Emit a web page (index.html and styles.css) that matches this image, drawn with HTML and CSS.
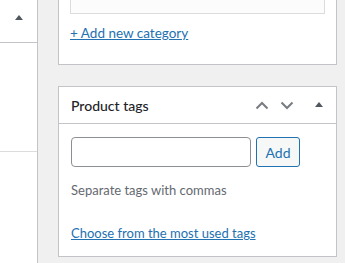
FILE: index.html
```html
<!DOCTYPE html>
<html lang="en">

<head>
    <meta charset="UTF-8">
    <meta name="viewport" content="width=device-width, initial-scale=1.0">
    <title>Product tags</title>
    <link rel="stylesheet" href="styles.css">
</head>

<body>
    <div class="layout">
        <!-- left column, cut off -->
        <div class="main-col">
            <div class="main-head">
                <span class="toggle-tri"></span>
            </div>
            <div class="main-row"></div>
        </div>

        <!-- sidebar -->
        <div class="side-col">
            <div class="postbox postbox-cut">
                <div class="cat-list"></div>
                <a href="#" class="add-cat">+ Add new category</a>
            </div>

            <div class="postbox">
                <div class="postbox-header">
                    <h2>Product tags</h2>
                    <div class="handle-actions">
                        <svg width="14" height="9" viewBox="0 0 14 9"><path d="M1.5 7.5 L7 2 L12.5 7.5" fill="none" stroke="#787c82" stroke-width="2"/></svg>
                        <svg width="14" height="9" viewBox="0 0 14 9"><path d="M1.5 1.5 L7 7 L12.5 1.5" fill="none" stroke="#787c82" stroke-width="2"/></svg>
                        <span class="toggle-tri"></span>
                    </div>
                </div>
                <div class="inside">
                    <div class="tag-add">
                        <input type="text" class="tag-input">
                        <button class="button">Add</button>
                    </div>
                    <p class="howto">Separate tags with commas</p>
                    <a href="#" class="tagcloud-link">Choose from the most used tags</a>
                </div>
            </div>
        </div>
    </div>
</body>

</html>
```

FILE: styles.css
```css
* {
    margin: 0;
    padding: 0;
    box-sizing: border-box;
}

body {
    background: #f0f0f1;
    font-family: Lato, "Noto Sans", sans-serif;
    font-size: 13px;
    color: #1d2327;
    overflow: hidden;
}

a {
    color: #2271b1;
    text-decoration: underline;
}

.layout {
    display: flex;
    height: 263px;
}

.main-col {
    width: 38px;
    background: #fff;
    border-right: 1px solid #c3c4c7;
}

.main-head {
    height: 43px;
    border-bottom: 1px solid #c3c4c7;
    display: flex;
    justify-content: flex-end;
    padding: 13px 14px 0 0;
}

.main-row {
    height: 109px;
    border-bottom: 1px solid #dcdcde;
}

.toggle-tri {
    width: 0;
    height: 0;
    border-left: 4px solid transparent;
    border-right: 4px solid transparent;
    border-bottom: 5px solid #50575e;
    margin-top: 2px;
}

.side-col {
    width: 279px;
    margin-left: 20px;
}

.postbox {
    background: #fff;
    border: 1px solid #c3c4c7;
}

.postbox-cut {
    border-top: none;
    height: 65px;
    padding: 0 11px;
    margin-bottom: 21px;
}

.cat-list {
    height: 14px;
    background: #fcfcfc;
    border: 1px solid #dcdcde;
    border-top: none;
    margin-bottom: 10px;
}

.add-cat {
    display: block;
    font-size: 13.5px;
    line-height: 18px;
}

.postbox-header {
    height: 37px;
    border-bottom: 1px solid #c3c4c7;
    display: flex;
    align-items: center;
    justify-content: space-between;
    padding: 0 13px 0 12px;
}

.postbox-header h2 {
    font-size: 14px;
    font-weight: 500;
    color: #1d2327;
}

.handle-actions {
    display: flex;
    align-items: center;
    gap: 11px;
}

.handle-actions .toggle-tri {
    margin: 0 0 1px 10px;
}

.inside {
    padding: 13px 12px 0;
    height: 132px;
}

.tag-add {
    display: flex;
    gap: 5px;
}

.tag-input {
    width: 180px;
    height: 30px;
    border: 1px solid #8c8f94;
    border-radius: 4px;
    background: #fff;
}

.button {
    height: 30px;
    width: 44px;
    border: 1px solid #2271b1;
    border-radius: 3px;
    background: #f6f7f7;
    color: #2271b1;
    font-family: inherit;
    font-size: 14px;
}

.howto {
    color: #646970;
    margin-top: 14px;
    line-height: 18px;
}

.tagcloud-link {
    display: block;
    margin-top: 25px;
    line-height: 18px;
}
```
